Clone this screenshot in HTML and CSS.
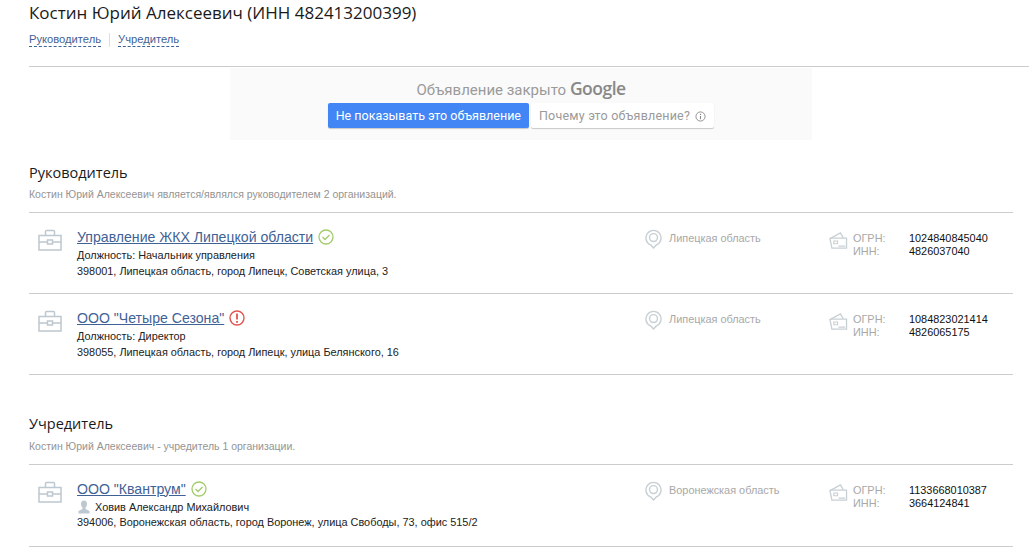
FILE: index.html
```html
<!DOCTYPE html>
<html lang="ru">
<head>
    <meta charset="UTF-8">
    <title>Костин Юрий Алексеевич</title>
    <link rel="stylesheet" href="styles.css">
</head>
<body>
    <svg class="sprites" width="0" height="0">
        <symbol id="case" viewBox="0 0 24 22">
            <path d="M1 6.500h22v14.500H1zM1 13h8.500M14.500 13H23M7.500 6.500V2.500a1 1 0 0 1 1-1h7a1 1 0 0 1 1 1v4M9.500 11h5v4h-5z" fill="none" stroke="#bdc8d0" stroke-width="1.500"/>
        </symbol>
        <symbol id="pin" viewBox="0 0 18 21">
            <path d="M9 20l-3-3.200A8 8 0 1 1 12 16.800z" fill="none" stroke="#c8d0d4" stroke-width="1.500"/>
            <circle cx="9" cy="9" r="4.200" fill="none" stroke="#c8d0d4" stroke-width="1.500"/>
        </symbol>
        <symbol id="card" viewBox="0 0 20 18">
            <path d="M1 7L12 1l3 5" fill="none" stroke="#c8d0d4" stroke-width="1.400"/>
            <path d="M1 7l2 10h15.500V6.500H3z" fill="#fff" stroke="#c8d0d4" stroke-width="1.400"/>
            <path d="M5 9.500h4v3H5zM10 15h7" fill="none" stroke="#c8d0d4" stroke-width="1.200"/>
        </symbol>
        <symbol id="ok" viewBox="0 0 16 16">
            <circle cx="8" cy="8" r="7" fill="none" stroke="#a3cc6c" stroke-width="1.300"/>
            <path d="M4.500 8l2.500 2.500 4.500-4.500" fill="none" stroke="#a3cc6c" stroke-width="1.400"/>
        </symbol>
        <symbol id="warn" viewBox="0 0 16 16">
            <circle cx="8" cy="8" r="7" fill="none" stroke="#e2544f" stroke-width="1.400"/>
            <path d="M8 3.500v6M8 11v1.800" fill="none" stroke="#e2544f" stroke-width="1.800"/>
        </symbol>
    </svg>

    <div class="page">
        <h1>Костин Юрий Алексеевич (ИНН 482413200399)</h1>
        <div class="tabs">
            <a href="#ruk">Руководитель</a>
            <a href="#uch">Учредитель</a>
        </div>
    </div>
    <hr class="top-line">

    <div class="ad">
        <div class="ad-title">Объявление закрыто <span class="google">Google</span></div>
        <div class="ad-buttons">
            <span class="ad-btn blue">Не показывать это объявление</span>
            <span class="ad-btn white">Почему это объявление?
                <svg class="info" viewBox="0 0 12 12" width="11" height="11"><circle cx="6" cy="6" r="5" fill="none" stroke="#8a8a8a"/><path d="M6 5.500v3.500M6 3v1.300" stroke="#8a8a8a" stroke-width="1.200"/></svg>
            </span>
        </div>
    </div>

    <div class="page">
        <section class="block" id="ruk">
            <h2>Руководитель</h2>
            <p class="sub">Костин Юрий Алексеевич является/являлся руководителем 2 организаций.</p>
            <div class="org">
                <svg class="ico-case"><use href="#case"/></svg>
                <div class="org-main">
                    <div class="org-name"><a href="#">Управление ЖКХ Липецкой области</a><svg class="status"><use href="#ok"/></svg></div>
                    <div class="line">Должность: Начальник управления</div>
                    <div class="line">398001, Липецкая область, город Липецк, Советская улица, 3</div>
                </div>
                <div class="org-region"><svg class="ico-pin"><use href="#pin"/></svg>Липецкая область</div>
                <div class="org-codes">
                    <svg class="ico-card"><use href="#card"/></svg>
                    <dl>
                        <dt>ОГРН:</dt><dd>1024840845040</dd>
                        <dt>ИНН:</dt><dd>4826037040</dd>
                    </dl>
                </div>
            </div>
            <div class="org">
                <svg class="ico-case"><use href="#case"/></svg>
                <div class="org-main">
                    <div class="org-name"><a href="#">ООО "Четыре Сезона"</a><svg class="status"><use href="#warn"/></svg></div>
                    <div class="line">Должность: Директор</div>
                    <div class="line">398055, Липецкая область, город Липецк, улица Белянского, 16</div>
                </div>
                <div class="org-region"><svg class="ico-pin"><use href="#pin"/></svg>Липецкая область</div>
                <div class="org-codes">
                    <svg class="ico-card"><use href="#card"/></svg>
                    <dl>
                        <dt>ОГРН:</dt><dd>1084823021414</dd>
                        <dt>ИНН:</dt><dd>4826065175</dd>
                    </dl>
                </div>
            </div>
        </section>

        <section class="block second" id="uch">
            <h2>Учредитель</h2>
            <p class="sub">Костин Юрий Алексеевич - учредитель 1 организации.</p>
            <div class="org">
                <svg class="ico-case"><use href="#case"/></svg>
                <div class="org-main">
                    <div class="org-name"><a href="#">ООО "Квантрум"</a><svg class="status"><use href="#ok"/></svg></div>
                    <div class="line person">
                        <svg class="ico-person" viewBox="0 0 12 14" width="12" height="14"><path d="M6 .5c2 0 3 1.500 3 3.500 0 1.500-.7 3-1.500 3.700V9l4 2v2.500H.5V11l4-2V7.700C3.700 7 3 5.500 3 4c0-2 1-3.500 3-3.500z" fill="#bdc8d0"/></svg>
                        Ховив Александр Михайлович
                    </div>
                    <div class="line">394006, Воронежская область, город Воронеж, улица Свободы, 73, офис 515/2</div>
                </div>
                <div class="org-region"><svg class="ico-pin"><use href="#pin"/></svg>Воронежская область</div>
                <div class="org-codes">
                    <svg class="ico-card"><use href="#card"/></svg>
                    <dl>
                        <dt>ОГРН:</dt><dd>1133668010387</dd>
                        <dt>ИНН:</dt><dd>3664124841</dd>
                    </dl>
                </div>
            </div>
        </section>
    </div>
</body>
</html>
```

FILE: styles.css
```css
body {
    margin: 0;
    background-color: #fff;
    font-family: "Liberation Sans", Arial, sans-serif;
    font-size: 10.900px;
    color: #222;
    overflow: hidden;
}
.sprites {
    display: block;
    height: 0;
}
.page {
    margin-left: 29px;
    width: 984px;
}
h1 {
    margin: 0;
    padding-top: 1px;
    font-family: "Open Sans", sans-serif;
    font-size: 17px;
    font-weight: 400;
    line-height: 24px;
    color: #1a1a1a;
}
.tabs {
    display: flex;
    margin-top: 8px;
    height: 15px;
}
.tabs a {
    color: #3f6296;
    font-size: 11.200px;
    text-decoration: none;
    border-bottom: 1px dashed #3f6296;
    height: 13px;
    line-height: 13px;
}
.tabs a:first-child {
    margin-right: 17px;
    position: relative;
}
.tabs a:first-child::after {
    content: "";
    position: absolute;
    right: -9px;
    top: 0;
    height: 14px;
    border-right: 1px solid #ddd;
}
.top-line {
    margin: 18px 0 0 29px;
    border: 0;
    border-top: 1px solid #ccc;
}
.ad {
    margin: 1px 0 0 230px;
    width: 582px;
    height: 72px;
    background-color: #fafafa;
    text-align: center;
}
.ad-title {
    padding-top: 9px;
    height: 26px;
    font-family: Roboto, sans-serif;
    font-size: 15px;
    line-height: 22px;
    color: #9a9a9a;
}
.google {
    font-family: "Open Sans", sans-serif;
    font-size: 17.500px;
    font-weight: 600;
    letter-spacing: -0.5px;
    color: #888;
}
.ad-buttons {
    display: flex;
    justify-content: center;
    gap: 2px;
}
.ad-btn {
    height: 25px;
    line-height: 25px;
    padding: 0 8px;
    border-radius: 2px;
    font-family: Roboto, sans-serif;
    font-size: 12.500px;
    box-shadow: 0 1px 1px rgba(0, 0, 0, 0.2);
}
.blue {
    background-color: #4285f4;
    color: #fff;
}
.white {
    background-color: #fff;
    color: #9a9a9a;
    letter-spacing: 0.2px;
}
.info {
    vertical-align: -2px;
    margin-left: 2px;
}
.block {
    margin-top: 24px;
}
.second {
    margin-top: 40px;
}
.second .sub {
    margin-top: 7px;
}
.second .org {
    height: 81px;
}
h2 {
    margin: 0;
    font-family: "Open Sans", sans-serif;
    font-size: 14.500px;
    font-weight: 400;
    line-height: 18px;
    color: #1a1a1a;
}
.sub {
    margin: 6px 0 12px;
    font-size: 10.500px;
    line-height: 12px;
    color: #949494;
}
.org {
    display: flex;
    height: 80px;
    border-top: 1px solid #ccc;
}
.org:last-child {
    border-bottom: 1px solid #ccc;
}
.ico-case {
    width: 24px;
    height: 22px;
    margin: 16px 0 0 9px;
    flex-shrink: 0;
}
.org-main {
    width: 568px;
    margin-left: 15px;
    padding-top: 14px;
}
.org-name {
    display: flex;
    align-items: center;
    height: 19px;
    margin-bottom: 1px;
    font-size: 14.100px;
}
.org-name a {
    color: #3f6296;
}
.status {
    width: 16px;
    height: 16px;
    margin-left: 5px;
}
.line {
    line-height: 16px;
    color: #222;
}
.person {
    display: flex;
    align-items: center;
    gap: 5px;
    height: 15px;
}
.ico-person {
    margin-left: 1px;
}
.org-region {
    display: flex;
    width: 184px;
    padding-top: 16px;
    line-height: 18px;
    color: #a8a8a8;
}
.ico-pin {
    width: 17px;
    height: 20px;
    margin-right: 7px;
}
.org-codes {
    display: flex;
    padding-top: 19px;
    align-items: flex-start;
}
.ico-card {
    width: 19px;
    height: 17px;
    margin-right: 5px;
}
dl {
    display: grid;
    grid-template-columns: 56px auto;
    align-content: start;
    margin: 0;
    line-height: 13px;
}
dt {
    color: #a8a8a8;
}
dd {
    margin: 0;
    color: #111;
}
```
